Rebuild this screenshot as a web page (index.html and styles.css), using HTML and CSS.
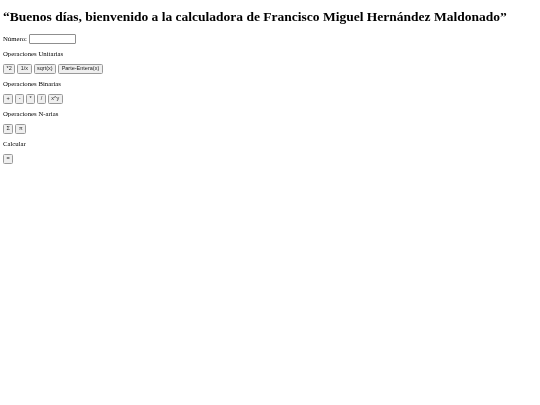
FILE: index.html
```html
<!DOCTYPE html>
<html>
  <head>
    <title>Calculadora</title>
    <link rel="stylesheet" href="styles.css">
  </head>
  <body>
    <h1 class="title">“Buenos días, bienvenido a la calculadora de Francisco Miguel Hernández Maldonado”</h1>
    <div class="row">
      <label for="numero">Número:</label>
      <input type="text" id="numero" class="field">
    </div>
    <p class="section">Operaciones Unitarias</p>
    <div class="row">
      <button class="key">*2</button>
      <button class="key">1/x</button>
      <button class="key">sqrt(x)</button>
      <button class="key">Parte-Entera(x)</button>
    </div>
    <p class="section">Operaciones Binarias</p>
    <div class="row">
      <button class="key">+</button>
      <button class="key">-</button>
      <button class="key">*</button>
      <button class="key">/</button>
      <button class="key">x^y</button>
    </div>
    <p class="section">Operaciones N-arias</p>
    <div class="row">
      <button class="key">Σ</button>
      <button class="key">π</button>
    </div>
    <p class="section">Calcular</p>
    <div class="row">
      <button class="key">=</button>
    </div>
  </body>
</html>
```

FILE: styles.css
```css
body {
  margin: 3px;
  background: #fff;
  color: #000;
  font-family: "Liberation Serif", serif;
  font-size: 6.75px;
  filter: blur(0.3px);
}

.title {
  margin: 6px 0 9px;
  font-size: 13.5px;
  font-weight: bold;
}

.row {
  display: flex;
  align-items: center;
  gap: 2px;
}

.section {
  margin: 6.75px 0;
}

.field {
  box-sizing: border-box;
  width: 47px;
  height: 9.5px;
  padding: 0 1px;
  border: 0.5px solid #8f8f8f;
  border-radius: 1px;
  background: #fff;
}

.key {
  box-sizing: border-box;
  height: 9.5px;
  padding: 0 2.5px;
  border: 0.5px solid #9a9a9a;
  border-radius: 1.5px;
  background: #efefef;
  color: #222;
  font-family: "Liberation Sans", sans-serif;
  font-size: 5.5px;
  line-height: 1;
}
```
